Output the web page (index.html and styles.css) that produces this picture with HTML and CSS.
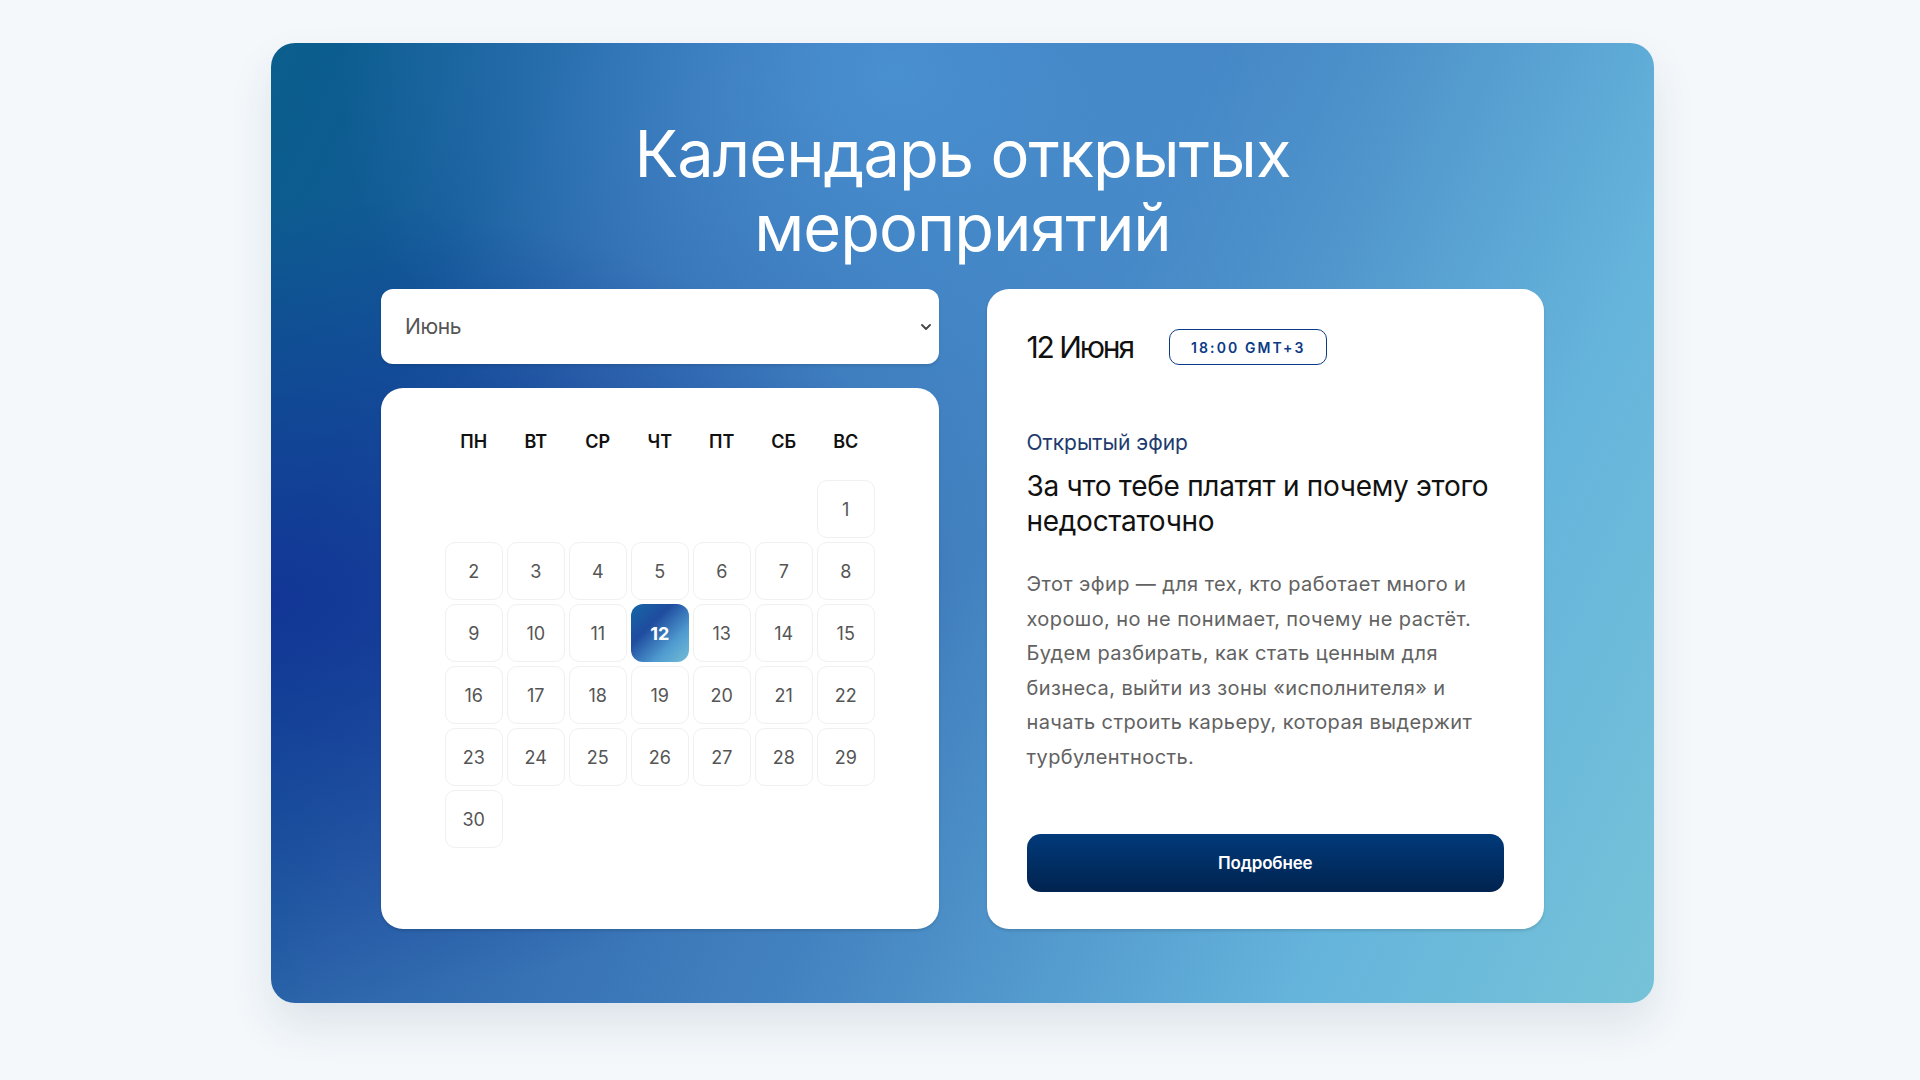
FILE: index.html
```html
<!DOCTYPE html>
<html lang="ru">
<head>
<meta charset="utf-8">
<title>Календарь открытых мероприятий</title>
<link rel="stylesheet" href="styles.css">
</head>
<body>
<section class="hero">
  <h1 class="hero-title">Календарь открытых<br>мероприятий</h1>
  <div class="columns">
    <div class="left">
      <div class="month-select">
        <span class="month-value">Июнь</span>
        <svg class="chevron" width="10" height="6" viewBox="0 0 10 6"><path d="M1 1l4 4 4-4" fill="none" stroke="#444" stroke-width="1.8" stroke-linecap="round" stroke-linejoin="round"/></svg>
      </div>
      <div class="calendar">
        <div class="weekdays">
          <span>ПН</span><span>ВТ</span><span>СР</span><span>ЧТ</span><span>ПТ</span><span>СБ</span><span>ВС</span>
        </div>
        <div class="days">
          <span class="empty"></span><span class="empty"></span><span class="empty"></span><span class="empty"></span><span class="empty"></span><span class="empty"></span>
          <span class="day">1</span>
          <span class="day">2</span><span class="day">3</span><span class="day">4</span><span class="day">5</span><span class="day">6</span><span class="day">7</span><span class="day">8</span>
          <span class="day">9</span><span class="day">10</span><span class="day">11</span><span class="day active">12</span><span class="day">13</span><span class="day">14</span><span class="day">15</span>
          <span class="day">16</span><span class="day">17</span><span class="day">18</span><span class="day">19</span><span class="day">20</span><span class="day">21</span><span class="day">22</span>
          <span class="day">23</span><span class="day">24</span><span class="day">25</span><span class="day">26</span><span class="day">27</span><span class="day">28</span><span class="day">29</span>
          <span class="day">30</span>
        </div>
      </div>
    </div>
    <article class="event">
      <div class="event-head">
        <span class="event-date">12 Июня</span>
        <span class="event-time">18:00 GMT+3</span>
      </div>
      <div class="event-type">Открытый эфир</div>
      <h2 class="event-title">За что тебе платят и почему этого недостаточно</h2>
      <p class="event-desc">Этот эфир — для тех, кто работает много и хорошо, но не понимает, почему не растёт. Будем разбирать, как стать ценным для бизнеса, выйти из зоны «исполнителя» и начать строить карьеру, которая выдержит турбулентность.</p>
      <button class="event-btn">Подробнее</button>
    </article>
  </div>
</section>
</body>
</html>
```

FILE: styles.css
```css
* { box-sizing: border-box; }

html, body {
  margin: 0;
  padding: 0;
}

body {
  background: #f4f8fb;
  font-family: "Inter", "Noto Sans", sans-serif;
  padding: 43px 0 0 5px;
  min-height: 1080px;
}

.hero {
  width: 1383px;
  margin: 0 auto;
  border-radius: 24px;
  padding: 74px 110px 74px;
  background:
    radial-gradient(50% 42% at 0% 58%, rgba(18, 54, 150, 1) 0%, rgba(18, 54, 150, 0) 100%),
    radial-gradient(40% 50% at 45% 3%, rgba(76, 148, 212, 0.9) 0%, rgba(76, 148, 212, 0) 100%),
    linear-gradient(115deg, #0a5e8c 0%, #135a98 15%, #2c64aa 26%, #4382c0 52%, #65b4dc 80%, #76c3d8 100%);
  box-shadow: 0 22px 44px rgba(20, 50, 80, 0.10);
}

.hero-title {
  margin: 0 0 24px;
  text-align: center;
  color: #fff;
  font-weight: 400;
  font-size: 65px;
  line-height: 74px;
  letter-spacing: -0.015em;
}

.columns {
  display: grid;
  grid-template-columns: 1fr 1fr;
  gap: 48px;
}

.left {
  min-width: 0;
  display: flex;
  flex-direction: column;
  gap: 24px;
}

.month-select {
  height: 75px;
  background: #fff;
  border-radius: 12px;
  display: flex;
  align-items: center;
  justify-content: space-between;
  padding: 0 8px 0 24px;
  box-shadow: 0 2px 3px rgba(0, 0, 0, 0.10);
}

.month-value {
  font-size: 21px;
  color: #555;
  letter-spacing: -0.02em;
}

.chevron { display: block; }

.calendar {
  flex: 1;
  background: #fff;
  border-radius: 22px;
  padding: 42px 0 0;
  box-shadow: 0 2px 3px rgba(0, 0, 0, 0.12);
}

.weekdays,
.days {
  display: grid;
  grid-template-columns: repeat(7, 58px);
  column-gap: 4px;
  justify-content: center;
}

.weekdays {
  margin-bottom: 26px;
}

.weekdays span {
  text-align: center;
  font-size: 18px;
  line-height: 24px;
  font-weight: 600;
  color: #111;
}

.days {
  row-gap: 4px;
  grid-auto-rows: 58px;
}

.day {
  display: flex;
  align-items: center;
  justify-content: center;
  border: 1px solid #f0f0f0;
  border-radius: 10px;
  font-size: 18px;
  color: #555;
}

.day.active {
  border: none;
  border-radius: 12px;
  color: #fff;
  font-weight: 700;
  background: linear-gradient(135deg, #1667a6 0%, #1f4c9f 35%, #4f9bd0 70%, #74bed6 100%);
}

.event {
  min-width: 0;
  min-height: 640px;
  background: #fff;
  border-radius: 22px;
  padding: 40px 40px 37px;
  display: flex;
  flex-direction: column;
  box-shadow: 0 2px 3px rgba(0, 0, 0, 0.12);
}

.event-head {
  display: flex;
  align-items: center;
  gap: 36px;
  height: 36px;
}

.event-date {
  font-size: 30px;
  letter-spacing: -0.07em;
  color: #111;
}

.event-time {
  height: 36px;
  padding: 0 21px;
  display: flex;
  align-items: center;
  border: 1.5px solid #0b3a86;
  border-radius: 10px;
  font-size: 14px;
  font-weight: 600;
  letter-spacing: 0.15em;
  color: #0b3a86;
}

.event-type {
  margin-top: 64px;
  font-size: 21px;
  line-height: 28px;
  color: #1e3a6e;
  letter-spacing: 0;
}

.event-title {
  margin: 12px 0 0;
  font-size: 28px;
  line-height: 35px;
  font-weight: 400;
  color: #111;
  letter-spacing: -0.01em;
}

.event-desc {
  margin: 28px 0 0;
  font-size: 20px;
  line-height: 34.6px;
  color: #626262;
  letter-spacing: 0.02em;
}

.event-btn {
  margin-top: auto;
  height: 58px;
  width: 100%;
  border: none;
  border-radius: 14px;
  background: linear-gradient(180deg, #013a7a 0%, #01234f 100%);
  color: #fff;
  font-family: "Inter", "Noto Sans", sans-serif;
  font-size: 17px;
  font-weight: 600;
  letter-spacing: -0.01em;
}
```
